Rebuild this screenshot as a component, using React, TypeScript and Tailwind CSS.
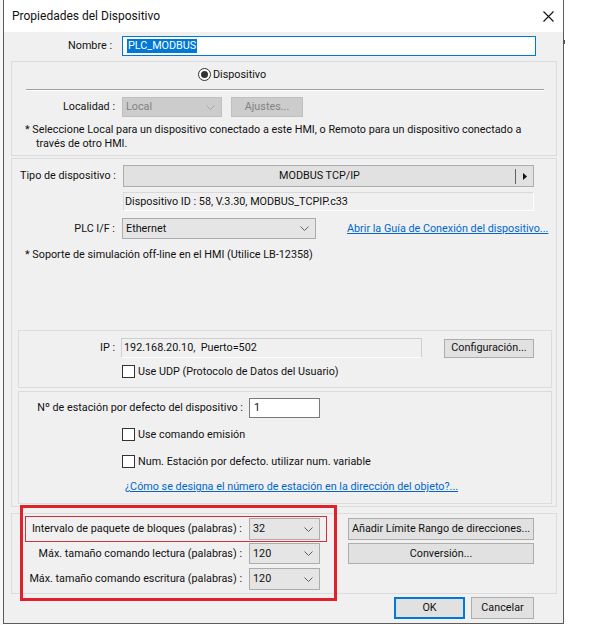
import React from "react";

function Chevron({ light }: { light?: boolean }) {
  return (
    <svg width="9" height="5" viewBox="0 0 9 5" className="shrink-0">
      <polyline points="0.5,0.5 4.5,4.5 8.5,0.5" fill="none" stroke={light ? "#a8a8a8" : "#606060"} strokeWidth="1" />
    </svg>
  );
}

function Combo({ value, className, disabled }: { value: string; className: string; disabled?: boolean }) {
  return (
    <div
      className={
        "flex items-center justify-between border pl-[3px] pr-[6px] " +
        (disabled ? "bg-[#cccccc] border-[#bfbfbf] text-[#838383] " : "bg-[#e5e5e5] border-[#acacac] ") +
        className
      }
    >
      <span>{value}</span>
      <Chevron light={disabled} />
    </div>
  );
}

function Button({ children, className }: { children: React.ReactNode; className: string }) {
  return (
    <div className={"flex items-center justify-center bg-[#e1e1e1] border border-[#adadad] " + className}>
      {children}
    </div>
  );
}

function Check({ label, className }: { label: string; className: string }) {
  return (
    <div className={"flex items-center gap-[3px] h-[13px] " + className}>
      <div className="w-[13px] h-[13px] bg-white border border-[#333333] shrink-0" />
      <span className="leading-[13px]">{label}</span>
    </div>
  );
}

export default function App() {
  return (
    <div className="relative flex w-[599px] h-[625px] overflow-hidden bg-white text-[10.8px] text-[#111111] font-['Roboto',sans-serif] leading-[14px] whitespace-nowrap">
      <div className="w-[3px] h-full bg-[#f7f7f7]" />

      <div className="w-[561px] h-[624px] flex flex-col border-x border-b border-[#5c5c5c]">
        {/* title bar */}
        <div className="h-[32px] bg-white flex items-center justify-between pl-[8px] pr-[9px]">
          <span className="text-[12px]">Propiedades del Dispositivo</span>
          <svg width="11" height="11" viewBox="0 0 11 11">
            <path d="M0.5 0.5 L10.5 10.5 M10.5 0.5 L0.5 10.5" stroke="#111" strokeWidth="1.1" />
          </svg>
        </div>

        <div className="flex-1 bg-[#f0f0f0] flex flex-col">
          {/* Nombre */}
          <div className="mt-[4px] flex items-center h-[20px]">
            <div className="w-[108px] text-right">Nombre :</div>
            <div className="ml-[10px] w-[414px] h-[20px] bg-white border border-[#0078d7] flex items-center pl-[4px]">
              <span className="bg-[#0078d7] text-white px-[1px]">PLC_MODBUS</span>
            </div>
          </div>

          {/* grupo localidad */}
          <div className="ml-[7px] mt-[5px] w-[546px] h-[95px] border border-[#dcdcdc] flex flex-col">
            <div className="mt-[6px] ml-[186px] flex items-center gap-[2px] h-[13px]">
              <div className="w-[13px] h-[13px] rounded-full border border-[#333333] bg-white flex items-center justify-center">
                <div className="w-[7px] h-[7px] rounded-full bg-[#333333]" />
              </div>
              <span>Dispositivo</span>
            </div>
            <div className="mt-[8px] ml-[14px] w-[518px] h-px bg-[#a0a0a0]" />
            <div className="ml-[14px] w-[518px] h-px bg-white" />
            <div className="mt-[6px] flex items-center h-[20px]">
              <div className="w-[103px] text-right">Localidad :</div>
              <Combo value="Local" disabled className="ml-[7px] w-[100px] h-[20px]" />
              <div className="ml-[9px] w-[72px] h-[20px] flex items-center justify-center bg-[#cccccc] border border-[#bfbfbf] text-[#838383]">
                Ajustes...
              </div>
            </div>
            <div className="mt-[6px] pl-[13px]">
              <div>* Seleccione Local para un dispositivo conectado a este HMI, o Remoto para un dispositivo conectado a</div>
              <div className="pl-[11px]">través de otro HMI.</div>
            </div>
          </div>

          {/* grupo dispositivo */}
          <div className="ml-[7px] mt-[2px] w-[546px] h-[349px] border border-[#dcdcdc] flex flex-col">
            <div className="mt-[6px] flex items-center h-[22px]">
              <div className="w-[111px] pl-[8px]">Tipo de dispositivo :</div>
              <div className="w-[411px] h-[22px] bg-[#e1e1e1] border border-[#adadad] flex items-center">
                <div className="flex-1 text-center">MODBUS TCP/IP</div>
                <div className="w-px h-[15px] bg-[#606060]" />
                <div className="w-[17px] flex justify-center">
                  <svg width="4" height="7" viewBox="0 0 4 7">
                    <path d="M0 0 L4 3.5 L0 7 Z" fill="#111" />
                  </svg>
                </div>
              </div>
            </div>
            <div className="mt-[5px] ml-[111px] w-[411px] h-[19px] border border-[#d9d9d9] border-b-white border-r-white flex items-center pl-[1px]">
              Dispositivo ID : 58, V.3.30, MODBUS_TCPIP.c33
            </div>
            <div className="mt-[7px] flex items-center h-[21px]">
              <div className="w-[103px] text-right">PLC I/F :</div>
              <Combo value="Ethernet" className="ml-[7px] w-[194px] h-[21px]" />
              <span className="ml-[31px] text-[#0066cc] underline">Abrir la Guía de Conexión del dispositivo...</span>
            </div>
            <div className="mt-[9px] pl-[13px]">* Soporte de simulación off-line en el HMI (Utilice LB-12358)</div>

            {/* IP */}
            <div className="mt-[68px] ml-[6px] w-[534px] h-[58px] border border-[#dcdcdc] flex flex-col">
              <div className="mt-[7px] flex items-center h-[20px]">
                <div className="w-[96px] text-right">IP :</div>
                <div className="ml-[6px] w-[301px] h-[20px] border border-[#cfcfcf] border-b-white flex items-center pl-[2px]">
                  192.168.20.10,&nbsp; Puerto=502
                </div>
                <Button className="ml-[22px] w-[90px] h-[19px]">Configuración...</Button>
              </div>
              <Check label="Use UDP (Protocolo de Datos del Usuario)" className="mt-[7px] ml-[103px]" />
            </div>

            {/* estación */}
            <div className="mt-[3px] ml-[6px] w-[534px] h-[113px] border border-[#dcdcdc] flex flex-col">
              <div className="mt-[6px] flex items-center h-[20px]">
                <div className="w-[224px] text-right">Nº de estación por defecto del dispositivo :</div>
                <div className="ml-[6px] w-[71px] h-[20px] bg-white border border-[#7a7a7a] flex items-center pl-[4px]">1</div>
              </div>
              <Check label="Use comando emisión" className="mt-[10px] ml-[103px]" />
              <Check label="Num. Estación por defecto. utilizar num. variable" className="mt-[14px] ml-[103px]" />
              <div className="mt-[12px] ml-[106px] text-[#0066cc] underline">
                ¿Cómo se designa el número de estación en la dirección del objeto?...
              </div>
            </div>
          </div>

          {/* grupo bloques */}
          <div className="ml-[7px] mt-[6px] w-[546px] h-[81px] border border-[#dcdcdc] flex">
            <div className="flex flex-col">
              <div className="mt-[4px] flex items-center h-[22px]">
                <div className="w-[230px] text-right">Intervalo de paquete de bloques (palabras) :</div>
                <Combo value="32" className="ml-[7px] w-[71px] h-[22px]" />
              </div>
              <div className="mt-[3px] flex items-center h-[21px]">
                <div className="w-[230px] text-right">Máx. tamaño comando lectura (palabras) :</div>
                <Combo value="120" className="ml-[7px] w-[71px] h-[21px]" />
              </div>
              <div className="mt-[4px] flex items-center h-[22px]">
                <div className="w-[230px] text-right">Máx. tamaño comando escritura (palabras) :</div>
                <Combo value="120" className="ml-[7px] w-[71px] h-[22px]" />
              </div>
            </div>
            <div className="ml-[28px] flex flex-col">
              <Button className="mt-[4px] w-[186px] h-[22px]">Añadir Límite Rango de direcciones...</Button>
              <Button className="mt-[3px] w-[186px] h-[21px]">Conversión...</Button>
            </div>
          </div>

          {/* botones */}
          <div className="mt-[3px] flex justify-end gap-[6px] pr-[29px]">
            <div className="w-[71px] h-[22px] flex items-center justify-center bg-[#e1e1e1] border-2 border-[#0078d7]">OK</div>
            <Button className="w-[63px] h-[22px]">Cancelar</Button>
          </div>
        </div>
      </div>

      {/* anotaciones */}
      <div className="absolute left-[20px] top-[505px] w-[317px] h-[96px] border-[3px] border-[#e0202a]" />
      <div className="absolute left-[25px] top-[516px] w-[302px] h-[26px] border border-[#d0303a]" />
      <div className="absolute left-[563px] top-[40px] w-[2px] h-[4px] bg-[#555555]" />
    </div>
  );
}
